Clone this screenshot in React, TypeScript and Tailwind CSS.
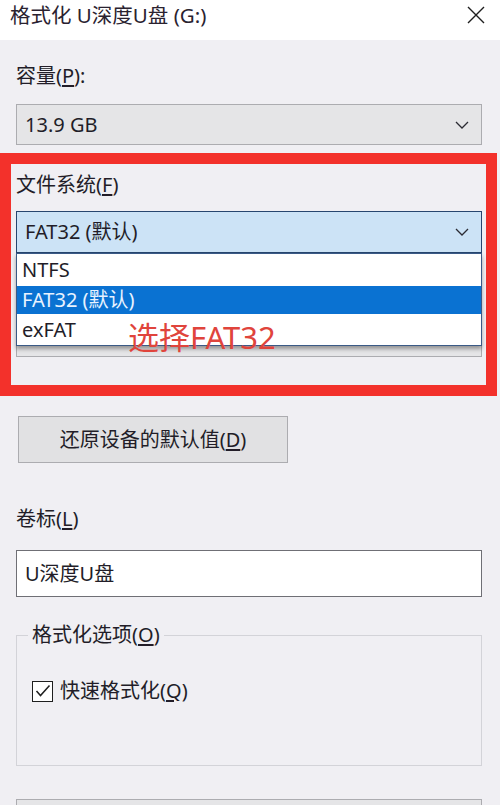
import React from 'react';

const Chevron = () => (
  <svg width="14" height="8" viewBox="0 0 14 8" className="shrink-0">
    <polyline points="1,1 7,7 13,1" fill="none" stroke="#2b2b33" strokeWidth="1.3" />
  </svg>
);

const Label = ({ text, mnemonic, tail = '' }: { text: string; mnemonic: string; tail?: string }) => (
  <span>
    {text}(<span className="underline underline-offset-2">{mnemonic}</span>){tail}
  </span>
);

export default function App() {
  return (
    <div className="w-[500px] h-[805px] overflow-hidden bg-[#f0eff3] text-[20px] text-[#221d28] font-['Noto_Sans','Noto_Sans_CJK_SC',sans-serif]">
      {/* Title bar */}
      <div className="h-[40px] bg-white flex items-start justify-between pl-[10px] pr-[14px]">
        <span className="leading-[28px] pt-[1px] text-[20.5px] text-[#2a2230]">格式化 U深度U盘 (G:)</span>
        <svg width="20" height="20" viewBox="0 0 20 20" className="mt-[5px]">
          <path d="M2 2 L18 18 M18 2 L2 18" stroke="#1f1f1f" strokeWidth="1.4" />
        </svg>
      </div>

      <div className="px-[16px]">
        {/* Capacity */}
        <div className="mt-[22px] leading-[28px]">
          <Label text="容量" mnemonic="P" tail=":" />
        </div>
        <div className="mt-[14px] w-[466px] h-[41px] bg-[#e5e5e7] border border-[#acacb0] flex items-center justify-between pl-[8px] pr-[12px]">
          <span>13.9 GB</span>
          <Chevron />
        </div>

        {/* Highlighted file system section */}
        <div className="-ml-[16px] mt-[8px] w-[497px] border-[11px] border-[#f3312b] pl-[5px] pr-[4px] pt-[7px] pb-[28px]">
          <div className="leading-[28px]">
            <Label text="文件系统" mnemonic="F" />
          </div>
          <div className="relative mt-[12px]">
            <div className="h-[42px] bg-[#cce3f6] border border-[#27466f] flex items-center justify-between pl-[8px] pr-[12px]">
              <span>FAT32 (默认)</span>
              <Chevron />
            </div>

            {/* allocation size row, mostly hidden under the list */}
            <div className="mt-[63px] h-[41px] bg-[#e5e5e7] border border-[#acacb0]" />

            {/* Open dropdown list */}
            <div className="absolute left-0 top-[42px] w-full bg-white border border-[#3b5a86] shadow-[0_3px_4px_rgba(0,0,0,0.35)]">
              <div className="h-[32px] flex items-center pl-[5px]">NTFS</div>
              <div className="h-[28px] flex items-center pl-[5px] bg-[#0a72d2] text-[#e8f2ff]">FAT32 (默认)</div>
              <div className="h-[31px] flex items-center pl-[5px]">exFAT</div>
            </div>

            {/* Annotation */}
            <div className="absolute left-[112px] top-[108px] text-[31px] leading-[36px] text-[#e0443c]">选择FAT32</div>
          </div>
        </div>

        {/* Restore defaults */}
        <div className="mt-[20px] ml-[2px] w-[270px] h-[47px] bg-[#e1e1e3] border border-[#acacb0] flex items-center justify-center">
          <Label text="还原设备的默认值" mnemonic="D" />
        </div>

        {/* Volume label */}
        <div className="mt-[42px] leading-[28px]">
          <Label text="卷标" mnemonic="L" />
        </div>
        <div className="mt-[17px] w-[466px] h-[47px] bg-white border border-[#6f6f75] flex items-center pl-[8px]">
          U深度U盘
        </div>

        {/* Format options */}
        <fieldset className="mt-[26px] w-[466px] h-[143px] border border-[#d3d3d8]">
          <legend className="ml-[11px] px-[4px] leading-[24px]">
            <Label text="格式化选项" mnemonic="O" />
          </legend>
          <div className="ml-[15px] mt-[29px] flex items-center gap-[7px]">
            <div className="w-[21px] h-[21px] bg-white border border-[#1f1f1f] flex items-center justify-center">
              <svg width="16" height="14" viewBox="0 0 16 14">
                <polyline points="1.5,7 5.5,11.5 14.5,1.5" fill="none" stroke="#1f1f1f" strokeWidth="1.5" />
              </svg>
            </div>
            <Label text="快速格式化" mnemonic="Q" />
          </div>
        </fieldset>

        {/* Start button (cut off) */}
        <div className="mt-[33px] w-[466px] h-[40px] bg-[#e5e5e7] border border-[#acacb0]" />
      </div>
    </div>
  );
}
